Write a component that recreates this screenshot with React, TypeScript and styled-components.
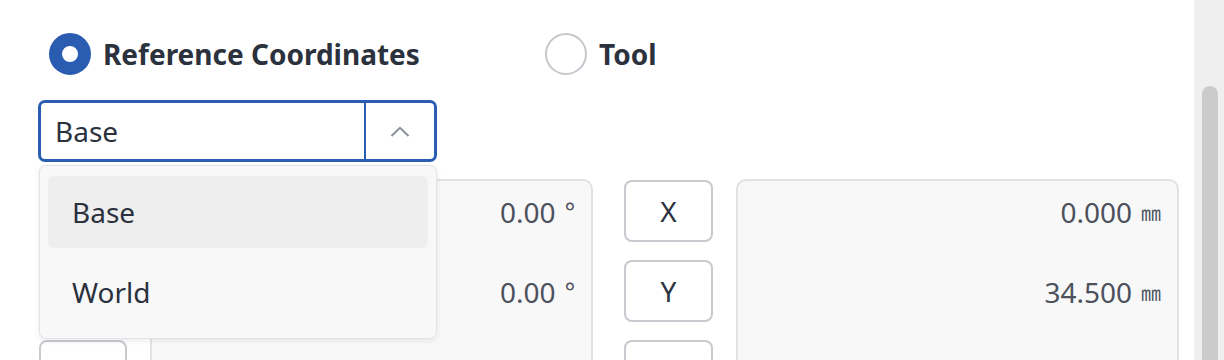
import React from "react";
import styled, { createGlobalStyle } from "styled-components";

const GlobalStyle = createGlobalStyle`
  html, body { margin: 0; padding: 0; background: #ffffff; overflow: hidden; }
  body { font-family: "Noto Sans", "Noto Sans CJK KR", sans-serif; color: #2b313d; }
  * { box-sizing: border-box; }
`;

const BLUE = "#2a5db1";

const Page = styled.div`
  display: flex;
  width: 1224px;
  height: 360px;
  overflow: hidden;
`;

const Main = styled.div`
  width: 1141px;
  margin-left: 38px;
  display: flex;
  flex-direction: column;
`;

const TopRule = styled.div`
  height: 2px;
  margin-top: 1px;
  background: #d9dce0;
`;

const RadioRow = styled.div`
  display: grid;
  grid-template-columns: 496px auto;
  padding-left: 11px;
  margin-top: 32px;
`;

const RadioOption = styled.label`
  display: flex;
  align-items: center;
  gap: 12px;
  font-size: 28px;
  font-weight: 700;
  color: #2b313d;
  line-height: 42px;
`;

const RadioDot = styled.span<{ $checked?: boolean }>`
  width: 42px;
  height: 42px;
  border-radius: 50%;
  flex: none;
  background: #ffffff;
  border: ${(p) => (p.$checked ? `13px solid ${BLUE}` : "2px solid #c6c7cc")};
`;

const SelectWrap = styled.div`
  position: relative;
  width: 399px;
  margin-top: 25px;
`;

const SelectBox = styled.div`
  display: flex;
  height: 62px;
  border: 3px solid ${BLUE};
  border-radius: 7px;
  background: #ffffff;
`;

const SelectValue = styled.div`
  flex: 1;
  display: flex;
  align-items: center;
  padding-left: 14px;
  font-size: 28px;
  color: #2b313d;
`;

const SelectToggle = styled.div`
  width: 70px;
  border-left: 2px solid ${BLUE};
  display: flex;
  align-items: center;
  justify-content: center;
`;

const Menu = styled.div`
  position: absolute;
  top: calc(100% + 3px);
  left: 1px;
  right: 0;
  z-index: 10;
  display: flex;
  flex-direction: column;
  gap: 8px;
  padding: 10px 8px;
  background: #f8f8f8;
  border: 1px solid #e2e3e6;
  border-radius: 7px;
  box-shadow: 0 2px 6px rgba(0, 0, 0, 0.08);
`;

const MenuItem = styled.div<{ $active?: boolean }>`
  height: 72px;
  display: flex;
  align-items: center;
  padding-left: 24px;
  border-radius: 6px;
  font-size: 28px;
  color: #2b313d;
  background: ${(p) => (p.$active ? "#eeeeee" : "transparent")};
`;

const Groups = styled.div`
  display: flex;
  gap: 31px;
  margin-top: 17px;
`;

const Group = styled.div<{ $inset?: boolean }>`
  display: grid;
  grid-template-columns: ${(p) => (p.$inset ? "88px" : "89px")} 1fr;
  column-gap: 23px;
  width: 555px;
  padding-left: ${(p) => (p.$inset ? "1px" : "0")};
  align-items: start;
`;

const ButtonCol = styled.div`
  display: flex;
  flex-direction: column;
  gap: 18px;
  padding-top: 1px;
`;

const AxisButton = styled.div`
  height: 62px;
  border: 2px solid #c8cacf;
  border-radius: 8px;
  background: #ffffff;
  display: flex;
  align-items: center;
  justify-content: center;
  font-size: 28px;
  color: #2b313d;
`;

const Panel = styled.div`
  height: 260px;
  background: #f8f8f8;
  border: 2px solid #e0e2e5;
  border-radius: 10px;
  display: flex;
  flex-direction: column;
  gap: 18px;
  padding: 0 16px;
`;

const ValueRow = styled.div`
  height: 62px;
  display: flex;
  align-items: center;
  justify-content: flex-end;
  gap: 9px;
  font-size: 28px;
  color: #4c515c;
`;

const Unit = styled.span<{ $small?: boolean }>`
  font-family: "Noto Sans CJK KR", "Noto Sans", sans-serif;
  font-size: ${(p) => (p.$small ? "20px" : "28px")};
  color: #4c515c;
`;

const ScrollTrack = styled.div`
  width: 30px;
  margin-left: auto;
  height: 360px;
  background: #efefef;
  padding: 86px 6px 0 8px;
`;

const ScrollThumb = styled.div`
  width: 16px;
  height: 100%;
  background: #cbcbcb;
  border-radius: 8px 8px 0 0;
`;

const Chevron = () => (
  <svg width="20" height="11" viewBox="0 0 20 11" fill="none">
    <polyline points="1.5,10 10,1.8 18.5,10" stroke="#8b909c" strokeWidth="2" fill="none" />
  </svg>
);

const rot = ["0.00", "0.00", "0.00"];
const pos = ["0.000", "34.500", "0.000"];

export default function App() {
  return (
    <>
      <GlobalStyle />
      <Page>
        <Main>
          <TopRule />
          <RadioRow>
            <RadioOption>
              <RadioDot $checked />
              Reference Coordinates
            </RadioOption>
            <RadioOption>
              <RadioDot />
              Tool
            </RadioOption>
          </RadioRow>
          <SelectWrap>
            <SelectBox>
              <SelectValue>Base</SelectValue>
              <SelectToggle>
                <Chevron />
              </SelectToggle>
            </SelectBox>
            <Menu>
              <MenuItem $active>Base</MenuItem>
              <MenuItem>World</MenuItem>
            </Menu>
          </SelectWrap>
          <Groups>
            <Group $inset>
              <ButtonCol>
                <AxisButton>Rx</AxisButton>
                <AxisButton>Ry</AxisButton>
                <AxisButton>Rz</AxisButton>
              </ButtonCol>
              <Panel>
                {rot.map((v, i) => (
                  <ValueRow key={i}>
                    {v}
                    <Unit>°</Unit>
                  </ValueRow>
                ))}
              </Panel>
            </Group>
            <Group>
              <ButtonCol>
                <AxisButton>X</AxisButton>
                <AxisButton>Y</AxisButton>
                <AxisButton>Z</AxisButton>
              </ButtonCol>
              <Panel>
                {pos.map((v, i) => (
                  <ValueRow key={i}>
                    {v}
                    <Unit $small>㎜</Unit>
                  </ValueRow>
                ))}
              </Panel>
            </Group>
          </Groups>
        </Main>
        <ScrollTrack>
          <ScrollThumb />
        </ScrollTrack>
      </Page>
    </>
  );
}
